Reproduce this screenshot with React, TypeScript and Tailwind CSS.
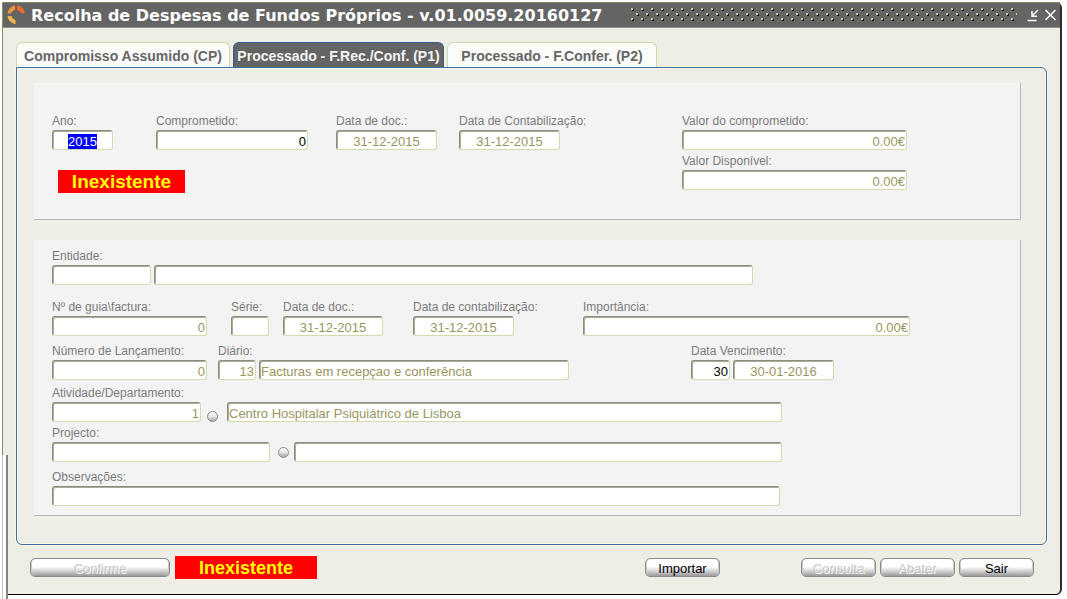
import { useEffect, useRef, type ReactNode, type Ref } from "react";

const BOX =
  "h-5 rounded-[3px] border border-[#d3dbac] border-t-[#8b8f78] border-l-[#8b8f78] bg-white px-px pt-0.5 text-[13px] leading-4 outline-none shadow-[inset_1px_1px_0_#a9aa9e]";

type BoxProps = {
  id: string;
  value?: string;
  width: string;
  align?: string;
  color?: string;
  label?: string;
  inputRef?: Ref<HTMLInputElement>;
};

function Box({ id, value = "", width, align = "text-left", color = "text-[#99955f]", label, inputRef }: BoxProps) {
  return (
    <input
      id={id}
      ref={inputRef}
      aria-label={label}
      defaultValue={value}
      className={`${BOX} ${width} ${align} ${color} selection:bg-[#0000ff] selection:text-white`}
    />
  );
}

function Field({ id, title, className = "", children }: { id: string; title: string; className?: string; children: ReactNode }) {
  return (
    <div className={`flex flex-col gap-px ${className}`}>
      <label htmlFor={id} className="h-4 w-0 text-xs leading-4 whitespace-nowrap text-[#7b7b7b]">
        {title}
      </label>
      <div className="flex items-end gap-[3px]">{children}</div>
    </div>
  );
}

function Tab({ title, active = false, width }: { title: string; active?: boolean; width: string }) {
  const look = active
    ? "border-[#33608f] bg-[#646464] text-[#f4f4f4]"
    : "border-[#d0d8a8] bg-[#fbfbfa] text-[#666666]";
  return (
    <button
      role="tab"
      aria-selected={active}
      className={`${look} ${width} h-[25px] rounded-t-md border border-b-0 pt-0.5 text-[14px] font-bold whitespace-nowrap`}
    >
      {title}
    </button>
  );
}

function PushButton({ title, disabled = false, width = "w-[75px]" }: { title: string; disabled?: boolean; width?: string }) {
  return (
    <button
      disabled={disabled}
      className={`${width} h-[19px] rounded-[5px] border border-[#8c8c8c] bg-linear-to-b from-white from-45% via-[#dedede] via-65% to-[#9a9a9a] pt-0.5 text-[13px] leading-4 shadow-[inset_1px_0_0_#c8c8c8,inset_-1px_0_0_#c8c8c8] ${
        disabled ? "text-[#c9c9c9] [text-shadow:1px_1px_0_#f8f8f8]" : "text-black"
      }`}
    >
      {title}
    </button>
  );
}

function Knob({ label, className }: { label: string; className: string }) {
  return (
    <button
      aria-label={label}
      className={`${className} size-[11px] shrink-0 rounded-full border border-[#8b8b8b] bg-linear-to-b from-white via-[#e4e4e4] to-[#a8a8a8]`}
    />
  );
}

export default function App() {
  const year = useRef<HTMLInputElement>(null);
  useEffect(() => {
    year.current?.focus();
    year.current?.select();
  }, []);

  return (
    <div className="relative min-h-screen bg-white pt-0.5 pr-[5px] pb-[3px] pl-0.5 font-['Liberation_Sans',Arial,sans-serif]">
      <main className="rounded-r-md border border-t-0 border-r-2 border-[#8d8d5f] border-r-[#2c2c2c] border-b-black bg-[#efeee6]">
        <header className="flex h-[26px] items-center border-t border-b border-t-[#85855c] border-b-[#8f8f8f] bg-[#646464] pr-1 pl-1">
          <svg width="20" height="20" viewBox="0 0 20 20" className="mr-1 shrink-0" aria-hidden="true">
            <path d="M0.500 8.500C1 4.500 4 1 8 0.500V5C6 5.500 4.500 6.500 4 8.500Z" fill="#f0963c" />
            <path d="M10 0.500C14 0.500 17.500 4 18 8.500L14 8C13 6.500 12 5.500 10 5Z" fill="#ea6a36" />
            <path d="M0.500 11H4.500C5 13 6.500 14.500 8.500 15V19C4 18.500 1 15 0.500 11Z" fill="#f2b544" />
          </svg>
          <h1 className="min-w-[590px] pt-0.5 font-['DejaVu_Sans',Verdana,sans-serif] text-base font-bold whitespace-nowrap text-white">
            Recolha de Despesas de Fundos Próprios - v.01.0059.20160127
          </h1>
          <svg height="14" className="mr-2.5 ml-2.5 min-w-0 flex-1" aria-hidden="true">
            <defs>
              <pattern id="grip" width="10" height="10" patternUnits="userSpaceOnUse">
                <g id="dot">
                  <rect x="1" y="1" width="2" height="2" fill="#14140e" />
                  <rect x="0" y="0" width="2" height="2" fill="#c3caa2" />
                </g>
                <use href="#dot" x="5" y="5" />
              </pattern>
            </defs>
            <rect width="100%" height="14" fill="url(#grip)" />
          </svg>
          <button aria-label="Minimizar" className="text-white">
            <svg width="12" height="14" viewBox="0 0 12 14" fill="none" stroke="currentColor" strokeWidth="1.500">
              <path d="M0.500 12.500H9.500M11 2L5 8M5 3V8.200H10" />
            </svg>
          </button>
          <button aria-label="Fechar" className="ml-1.5 text-white">
            <svg width="11" height="12" viewBox="0 0 11 12" fill="none" stroke="currentColor" strokeWidth="1.500">
              <path d="M0.500 1L10.500 11M10.500 1L0.500 11" />
            </svg>
          </button>
        </header>

        <div className="pt-3.5 pr-[13px] pl-[13px]">
          <div role="tablist" className="flex gap-[3px]">
            <Tab title="Compromisso Assumido (CP)" width="w-[214px]" />
            <Tab title="Processado - F.Rec./Conf. (P1)" width="w-[211px]" active />
            <Tab title="Processado - F.Confer. (P2)" width="w-[210px]" />
          </div>

          <div className="rounded-r-md rounded-bl-md border border-[#3e6f9f] pt-[15px] pr-[25px] pb-7 pl-[17px] shadow-[inset_0_0_0_1px_#f8f8e6,0_0_0_1px_#f8f8e6]">
            <section className="flex h-[137px] items-start border-r border-b border-[#b8b8b8] bg-[#f3f3f3] pt-[30px] pl-[18px]">
              <div>
                <div className="flex">
                  <Field id="ano" title="Ano:" className="w-[104px]">
                    <Box id="ano" inputRef={year} value="2015" width="w-[61px]" align="text-center" />
                  </Field>
                  <Field id="comprometido" title="Comprometido:" className="w-[180px]">
                    <Box id="comprometido" value="0" width="w-[152px]" align="text-right" color="text-black" />
                  </Field>
                  <Field id="doc" title="Data de doc.:" className="w-[123px]">
                    <Box id="doc" value="31-12-2015" width="w-[101px]" align="text-center" />
                  </Field>
                  <Field id="contab" title="Data de Contabilização:" className="w-[223px]">
                    <Box id="contab" value="31-12-2015" width="w-[101px]" align="text-center" />
                  </Field>
                </div>
                <p className="mt-5 ml-1.5 h-[23px] w-[127px] bg-[#ff0000] text-center text-[19px] leading-6 font-bold text-[#ffff00]">
                  Inexistente
                </p>
              </div>
              <div className="flex flex-col gap-[3px]">
                <Field id="valor" title="Valor do comprometido:">
                  <Box id="valor" value="0.00€" width="w-[225px]" align="text-right" />
                </Field>
                <Field id="disponivel" title="Valor Disponível:">
                  <Box id="disponivel" value="0.00€" width="w-[225px]" align="text-right" />
                </Field>
              </div>
            </section>

            <section className="mt-5 border-r border-b border-[#b8b8b8] bg-[#f3f3f3] pt-2 pb-[9px] pl-[18px]">
              <Field id="entidade" title="Entidade:">
                <Box id="entidade" width="w-[99px]" />
                <Box id="entidade-nome" label="Nome da entidade" width="w-[599px]" />
              </Field>

              <div className="mt-3.5 flex">
                <Field id="guia" title="Nº de guia\factura:" className="w-[179px]">
                  <Box id="guia" value="0" width="w-[155px]" align="text-right" />
                </Field>
                <Field id="serie" title="Série:" className="w-[52px]">
                  <Box id="serie" width="w-[38px]" />
                </Field>
                <Field id="doc2" title="Data de doc.:" className="w-[130px]">
                  <Box id="doc2" value="31-12-2015" width="w-[100px]" align="text-center" />
                </Field>
                <Field id="contab2" title="Data de contabilização:" className="w-[170px]">
                  <Box id="contab2" value="31-12-2015" width="w-[101px]" align="text-center" />
                </Field>
                <Field id="importancia" title="Importância:">
                  <Box id="importancia" value="0.00€" width="w-[327px]" align="text-right" />
                </Field>
              </div>

              <div className="mt-[7px] flex">
                <Field id="lancamento" title="Número de Lançamento:" className="w-[166px]">
                  <Box id="lancamento" value="0" width="w-[155px]" align="text-right" />
                </Field>
                <Field id="diario" title="Diário:" className="w-[473px]">
                  <Box id="diario" value="13" width="w-[38px]" align="text-right" />
                  <Box id="diario-nome" label="Nome do diário" value="Facturas em recepçao e conferência" width="w-[310px]" />
                </Field>
                <Field id="vencimento" title="Data Vencimento:">
                  <Box id="vencimento" value="30" width="w-[39px]" align="text-right" color="text-black" />
                  <Box id="vencimento-data" label="Data" value="30-01-2016" width="w-[101px]" align="text-center" />
                </Field>
              </div>

              <Field id="atividade" title="Atividade/Departamento:" className="mt-[5px]">
                <Box id="atividade" value="1" width="w-[149px]" align="text-right" />
                <Knob label="Procurar departamento" className="mr-1.5 ml-[3px]" />
                <Box id="atividade-nome" label="Nome do departamento" value="Centro Hospitalar Psiquiátrico de Lisboa" width="w-[555px]" />
              </Field>

              <Field id="projecto" title="Projecto:" className="mt-[3px]">
                <Box id="projecto" width="w-[218px]" />
                <Knob label="Procurar projecto" className="mr-0.5 ml-[5px] self-center" />
                <Box id="projecto-nome" label="Nome do projecto" width="w-[488px]" />
              </Field>

              <Field id="observacoes" title="Observações:" className="mt-[7px]">
                <Box id="observacoes" width="w-[728px]" />
              </Field>
            </section>
          </div>
        </div>

        <footer className="flex items-center pt-[11px] pr-[26px] pb-[15px] pl-[27px]">
          <PushButton title="Confirme" disabled width="w-[140px]" />
          <p className="ml-[5px] h-[23px] w-[142px] bg-[#ff0000] text-center text-[18px] leading-6 font-bold text-[#ffff00]">
            Inexistente
          </p>
          <div className="ml-auto flex gap-1">
            <div className="mr-[77px] flex">
              <PushButton title="Importar" />
            </div>
            <PushButton title="Consulta" disabled />
            <PushButton title="Abater" disabled />
            <PushButton title="Sair" />
          </div>
        </footer>
      </main>
      <div className="absolute bottom-0 left-0 h-36 w-2 border-r-2 border-[#858585] bg-white pl-0.5">
        <div className="h-full w-px bg-[#c4c4c4]" />
      </div>
    </div>
  );
}
